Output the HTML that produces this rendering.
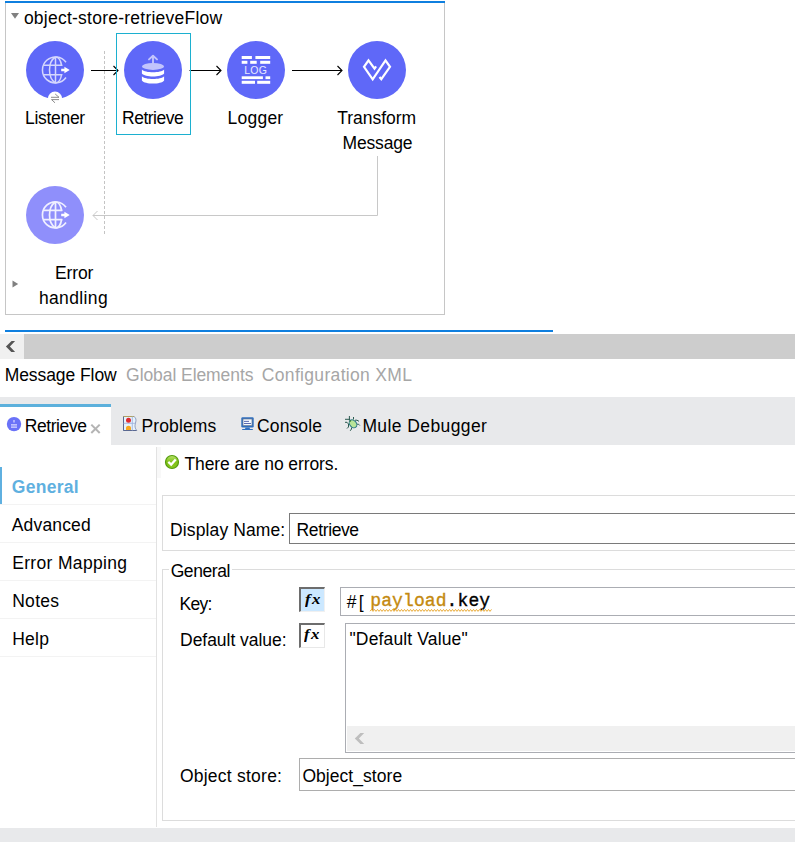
<!DOCTYPE html>
<html lang="en">
<head>
<meta charset="utf-8">
<title>object-store-retrieveFlow</title>
<style>
html,body{margin:0;padding:0;background:#fff;overflow:hidden;}
body{width:795px;height:842px;position:relative;overflow:hidden;font-family:"Liberation Sans",sans-serif;font-size:17.5px;line-height:20px;color:#000;}
.a{position:absolute;}
.t{position:absolute;white-space:pre;line-height:20px;}
svg{position:absolute;left:0;top:0;overflow:visible;}
.mono{font-family:"Liberation Mono",monospace;}
.fx{position:absolute;font-family:"Liberation Serif",serif;font-style:italic;font-weight:bold;font-size:15px;line-height:16px;letter-spacing:1.3px;transform:scaleX(1.12);transform-origin:0 0;}
</style>
</head>
<body>
<!-- canvas panel -->
<div class="a" style="left:5px;top:1px;width:440px;height:2px;background:#0f7fdf"></div>
<div class="a" style="left:5px;top:3px;width:438px;height:311px;border:1px solid #c6c6c6;border-top:none"></div>
<!-- second blue line + scrollbar -->
<div class="a" style="left:5px;top:330px;width:548px;height:2px;background:#0f7fdf"></div>
<div class="a" style="left:0;top:334px;width:795px;height:25px;background:#f0f0f0"></div>
<div class="a" style="left:24px;top:334px;width:771px;height:25px;background:#cdcdcd"></div>
<!-- tab bar -->
<div class="a" style="left:0;top:397px;width:795px;height:48px;background:#e8e9eb"></div>
<div class="a" style="left:0;top:404px;width:111px;height:41px;background:#fff"></div>
<div class="a" style="left:0;top:404px;width:111px;height:3px;background:#5cb0dc"></div>
<!-- sidebar -->
<div class="a" style="left:156px;top:447px;width:1px;height:380px;background:#e2e2e2"></div>
<div class="a" style="left:157px;top:447px;width:4px;height:31px;background:#f8f8f8"></div>
<div class="a" style="left:0;top:467px;width:2px;height:37px;background:#5fb0e0"></div>
<div class="a" style="left:0;top:504px;width:156px;height:1px;background:#f3f3f3"></div>
<div class="a" style="left:0;top:542px;width:156px;height:1px;background:#f3f3f3"></div>
<div class="a" style="left:0;top:580px;width:156px;height:1px;background:#f3f3f3"></div>
<div class="a" style="left:0;top:618px;width:156px;height:1px;background:#f3f3f3"></div>
<div class="a" style="left:0;top:656px;width:156px;height:1px;background:#f3f3f3"></div>
<!-- group boxes -->
<div class="a" style="left:162px;top:495px;width:700px;height:54px;border:1px solid #dcdcdc"></div>
<div class="a" style="left:289px;top:513px;width:600px;height:29px;border:1px solid #7a7a7a"></div>
<div class="a" style="left:162px;top:569px;width:700px;height:250px;border:1px solid #dcdcdc"></div>
<div class="a" style="left:169px;top:565px;width:63px;height:10px;background:#fff"></div>
<!-- key input -->
<div class="a" style="left:340px;top:587px;width:600px;height:27px;border:1px solid #abadb3"></div>
<!-- textarea -->
<div class="a" style="left:345px;top:623px;width:600px;height:128px;border:1px solid #abadb3"></div>
<div class="a" style="left:347px;top:726px;width:448px;height:25px;background:#f0f0f0"></div>
<!-- combo -->
<div class="a" style="left:299px;top:758px;width:600px;height:31px;border:1px solid #adadad"></div>
<!-- fx buttons -->
<div class="a" style="left:299px;top:587px;width:23px;height:22px;background:#cce8ff;border-top:2px solid #6d6d6d;border-left:2px solid #6d6d6d;border-right:1px solid #f0f0f0;border-bottom:1px solid #f0f0f0"></div>
<div class="a" style="left:299px;top:623px;width:23px;height:22px;background:#fff;border-top:2px solid #6d6d6d;border-left:2px solid #6d6d6d;border-right:1px solid #e8e8e8;border-bottom:1px solid #e8e8e8"></div>
<span class="fx" style="left:305.2px;top:590.7px">fx</span>
<span class="fx" style="left:304.2px;top:625.7px">fx</span>
<!-- bottom gray -->
<div class="a" style="left:0;top:828px;width:795px;height:14px;background:#e8e9eb"></div>

<!-- mono expression -->
<span class="t mono" id="m1" style="left:370.3px;top:590.5px;font-size:18px;color:#c48a10;letter-spacing:0.1px;-webkit-text-stroke:0.35px #c48a10">payload</span><span class="t mono" id="m2" style="left:446.6px;top:590.5px;font-size:18px;color:#000;letter-spacing:0.1px;-webkit-text-stroke:0.35px #000">.key</span>

<span class="t" id="t1" style="left:23.90px;top:8.04px;letter-spacing:0.239px;">object-store-retrieveFlow</span>
<span class="t" id="t2" style="left:25.10px;top:107.94px;letter-spacing:-0.309px;">Listener</span>
<span class="t" id="t3" style="left:122.00px;top:107.94px;letter-spacing:-0.496px;">Retrieve</span>
<span class="t" id="t4" style="left:227.60px;top:107.94px;letter-spacing:0.220px;">Logger</span>
<span class="t" id="t5" style="left:337.30px;top:107.94px;letter-spacing:-0.049px;">Transform</span>
<span class="t" id="t6" style="left:342.60px;top:133.04px;letter-spacing:-0.186px;">Message</span>
<span class="t" id="t7" style="left:55.10px;top:262.74px;letter-spacing:-0.173px;">Error</span>
<span class="t" id="t8" style="left:38.90px;top:288.04px;letter-spacing:0.375px;">handling</span>
<span class="t" id="t9" style="left:4.70px;top:365.04px;letter-spacing:-0.075px;">Message Flow</span>
<span class="t" id="t10" style="left:126.10px;top:365.04px;letter-spacing:-0.072px;color:#a6a6a6;">Global Elements</span>
<span class="t" id="t11" style="left:261.80px;top:365.04px;letter-spacing:0.328px;color:#a6a6a6;">Configuration XML</span>
<span class="t" id="t12" style="left:24.70px;top:415.64px;letter-spacing:-0.410px;">Retrieve</span>
<span class="t" id="t13" style="left:141.50px;top:415.64px;letter-spacing:0.125px;">Problems</span>
<span class="t" id="t14" style="left:257.10px;top:415.64px;letter-spacing:0.097px;">Console</span>
<span class="t" id="t15" style="left:362.40px;top:415.64px;letter-spacing:0.404px;">Mule Debugger</span>
<span class="t" id="t16" style="left:11.80px;top:476.54px;letter-spacing:0.285px;font-weight:bold;color:#5fb0e0;">General</span>
<span class="t" id="t17" style="left:11.80px;top:514.54px;letter-spacing:0.151px;">Advanced</span>
<span class="t" id="t18" style="left:12.20px;top:552.64px;letter-spacing:0.334px;">Error Mapping</span>
<span class="t" id="t19" style="left:12.20px;top:591.04px;letter-spacing:0.295px;">Notes</span>
<span class="t" id="t20" style="left:12.20px;top:629.04px;letter-spacing:0.267px;">Help</span>
<span class="t" id="t21" style="left:184.50px;top:453.94px;letter-spacing:-0.096px;">There are no errors.</span>
<span class="t" id="t22" style="left:170.10px;top:520.34px;letter-spacing:0.109px;">Display Name:</span>
<span class="t" id="t23" style="left:296.60px;top:520.34px;letter-spacing:-0.382px;">Retrieve</span>
<span class="t" id="t24" style="left:170.70px;top:560.94px;letter-spacing:-0.428px;">General</span>
<span class="t" id="t25" style="left:179.60px;top:593.54px;letter-spacing:-0.744px;">Key:</span>
<span class="t" id="t26" style="left:346.70px;top:591.94px;letter-spacing:2.291px;">#[</span>
<span class="t" id="t28" style="left:180.10px;top:629.54px;letter-spacing:-0.047px;">Default value:</span>
<span class="t" id="t29" style="left:349.50px;top:629.14px;letter-spacing:0.143px;">&quot;Default Value&quot;</span>
<span class="t" id="t30" style="left:179.90px;top:766.04px;letter-spacing:0.240px;">Object store:</span>
<span class="t" id="t31" style="left:302.40px;top:765.64px;letter-spacing:0.053px;">Object_store</span>

<svg width="795" height="842" viewBox="0 0 795 842">
<!-- title triangle -->
<polygon points="11,13 19,13 15,18.8" fill="#808080"/>
<polygon points="12.5,280.4 18.2,284 12.5,287.6" fill="#808080"/>
<!-- dashed lane -->
<line x1="104.5" y1="51" x2="104.5" y2="235" stroke="#c4c4c4" stroke-width="1" stroke-dasharray="3 2"/>
<!-- main circles -->
<g fill="#5f68f8">
<circle cx="55" cy="70" r="29"/><circle cx="153" cy="70" r="29"/><circle cx="256" cy="70" r="29"/><circle cx="377" cy="70" r="29"/>
</g>
<circle cx="55" cy="215" r="29" fill="#8f8ffb"/>
<!-- arrows -->
<g stroke="#000" stroke-width="1.1" fill="none">
<path d="M91 70.5H118M113.5 66L118 70.5L113.5 75"/>
<path d="M189.5 70.5H221M216.5 66L221 70.5L216.5 75"/>
<path d="M292 70.5H342M337.5 66L342 70.5L337.5 75"/>
</g>
<path d="M377.5 156V215.5H93M97.5 211L93 215.5L97.5 220" stroke="#c8c8c8" stroke-width="1" fill="none"/>
<!-- selection -->
<rect x="116.5" y="33.5" width="74" height="101" fill="none" stroke="#1cb0d0" stroke-width="1"/>
<!-- badge -->
<circle cx="55" cy="98.8" r="7.2" fill="#fff"/>
<path d="M51 97.3H59L55.2 94M59 99.6H51.5L55 102.8" stroke="#808080" stroke-width="0.9" fill="none"/>
<!-- globe icon (listener) -->
<g fill="none" stroke="#d4d6fd" stroke-width="1.5">
<path d="M66 62.3A13 13 0 1 0 66 77.5"/>
<path d="M55.5 57V83"/>
<path d="M55.5 57C47.5 62 47.5 78 55.5 83"/>
<path d="M55.5 57A6.5 13 0 0 1 61.7 66M61.7 74A6.5 13 0 0 1 55.5 83"/>
<path d="M43.6 65.3H62.3M43.6 74.7H62.3"/>
</g>
<path d="M61.2 68.7H64.4V66.7L69.7 70L64.4 73.3V71.3H61.2Z" fill="#fff"/>
<!-- globe icon (lower, lighter) -->
<g fill="none" stroke="#f0f0ff" stroke-width="1.7">
<path d="M66 207.3A13 13 0 1 0 66 222.5"/>
<path d="M55.5 202V228"/>
<path d="M55.5 202C47.5 207 47.5 223 55.5 228"/>
<path d="M55.5 202A6.5 13 0 0 1 61.7 211M61.7 219A6.5 13 0 0 1 55.5 228"/>
<path d="M43.6 210.3H62.3M43.6 219.7H62.3"/>
</g>
<path d="M61.2 213.7H64.4V211.7L69.7 215L64.4 218.3V216.3H61.2Z" fill="#fff"/>
<!-- retrieve icon -->
<path d="M153 63.5V56.5M149 59.4L153 55.7L157 59.4" stroke="#c2c4fc" stroke-width="1.9" fill="none" stroke-linecap="round" stroke-linejoin="round"/>
<ellipse cx="153" cy="66.4" rx="11.1" ry="3.5" fill="#c2c4fc"/>
<path d="M141.9 69.5C145 73.2 161 73.2 164.1 69.5V73.6C161 77.6 145 77.6 141.9 73.6Z" fill="#fff"/>
<path d="M141.9 76.3C145 80 161 80 164.1 76.3V80.4C161 84.6 145 84.6 141.9 80.4Z" fill="#fff"/>
<!-- logger icon -->
<g fill="#fff">
<rect x="241.7" y="56" width="10.2" height="3"/><rect x="255.4" y="56" width="14.8" height="3"/>
<rect x="241.7" y="60.8" width="5.7" height="3"/><rect x="250.2" y="60.8" width="6.5" height="3"/><rect x="260.2" y="60.8" width="10" height="3"/>
<rect x="241.7" y="76.3" width="21.2" height="2.8"/><rect x="265.5" y="76.3" width="4.7" height="2.8"/>
<rect x="241.7" y="80.8" width="13.3" height="3"/><rect x="257.2" y="80.8" width="13" height="3"/>
</g>
<text x="244.2" y="73.8" font-family="Liberation Sans, sans-serif" font-size="10.5" fill="#e8e8ff" letter-spacing="0.3">LOG</text>
<!-- transform icon -->
<path d="M376.1 66.4L374.5 68.7L368.5 60.4L364 66.8L372.7 79.4L385.5 60.4L390 66.8L381.3 79.2L379.5 77" stroke="#fff" stroke-width="2.2" fill="none" stroke-linejoin="miter"/>
<!-- scrollbar chevron -->
<polygon points="15.1,341.1 11.6,341.1 5.9,346.4 11.3,351.9 15.1,351.9 9.9,346.4" fill="#555"/>
<polygon points="364.2,733.1 360.4,733.1 354.8,738.4 360.4,743.9 364.2,743.9 358.9,738.4" fill="#bebebe"/>
<!-- tab: retrieve icon + close -->
<circle cx="14" cy="424.1" r="7.2" fill="#6a72f8"/>
<path d="M14 420V422.5M11 424.8H17M11 427.2H17" stroke="#dcdcff" stroke-width="1.2" fill="none"/>
<path d="M91.3 424.6L99.7 433M99.7 424.6L91.3 433" stroke="#b4b4b4" stroke-width="2" fill="none"/>
<!-- problems icon -->
<g>
<path d="M123.5 416.5H134C136 417.5 136.5 420 135.5 423C134.5 426 135 428.5 136.8 430.5H123.5Z" fill="#e6f2fc" stroke="#8896b8" stroke-width="0.9"/>
<path d="M123.5 416.5V430.5H136.5" stroke="#5a6890" stroke-width="1" fill="none"/>
<path d="M123.5 416.5H134" stroke="#b0a060" stroke-width="1" fill="none"/>
<path d="M123.5 423.3H135.5M132.3 416.5V430.5" stroke="#a0b4e0" stroke-width="0.9" fill="none"/>
<circle cx="128.5" cy="420.3" r="2.5" fill="#e02a30"/>
<path d="M126 430V428C126 425 131 425 131 428V430Z" fill="#f8a820"/>
</g>
<!-- console icon -->
<g>
<rect x="241.3" y="417.3" width="12.4" height="10.2" rx="1.2" fill="#2f6fbe"/>
<rect x="243" y="419" width="9" height="6.6" fill="#f4fbff" stroke="#6c7890" stroke-width="0.7"/>
<path d="M244 421.4H249M244 423.5H251" stroke="#4a5aa8" stroke-width="0.9"/>
<path d="M245.5 427.5H249.5L250 429H252.8V430H242.2V429H245Z" fill="#2f6fbe"/>
</g>
<!-- bug icon -->
<g>
<g stroke="#2c5a50" stroke-width="1" fill="none">
<path d="M349.4 416V420.5M345 419.3H350M353.5 417V419.5M345 422.3H347L348.5 424V427L347 428.5M355 420.2H357L359 421.3M357 424.2H358.5L359.8 425.5M351.5 427.5V429L350.2 430.8"/>
</g>
<ellipse cx="353" cy="423.8" rx="3.3" ry="4.4" transform="rotate(-40 353 423.8)" fill="#b8e498" stroke="#2c7888" stroke-width="1"/>
<circle cx="350.3" cy="421" r="0.8" fill="#2c7020"/>
</g>
<!-- green ok icon -->
<defs><linearGradient id="gok" x1="0" y1="0" x2="0" y2="1"><stop offset="0" stop-color="#b8e46c"/><stop offset="0.5" stop-color="#80c018"/><stop offset="1" stop-color="#88c820"/></linearGradient></defs>
<circle cx="172" cy="462" r="6.5" fill="url(#gok)" stroke="#549c0c" stroke-width="1.2"/>
<path d="M168.3 461.9L171.2 464.6L175.7 459.6" stroke="#fff" stroke-width="2.3" fill="none" stroke-linejoin="miter"/>
<!-- wavy underline -->
<path d="M370 611.2L371.5 609.4L373.0 611.4L374.5 609.4L376.0 611.4L377.5 609.4L379.0 611.4L380.5 609.4L382.0 611.4L383.5 609.4L385.0 611.4L386.5 609.4L388.0 611.4L389.5 609.4L391.0 611.4L392.5 609.4L394.0 611.4L395.5 609.4L397.0 611.4L398.5 609.4L400.0 611.4L401.5 609.4L403.0 611.4L404.5 609.4L406.0 611.4L407.5 609.4L409.0 611.4L410.5 609.4L412.0 611.4L413.5 609.4L415.0 611.4L416.5 609.4L418.0 611.4L419.5 609.4L421.0 611.4L422.5 609.4L424.0 611.4L425.5 609.4L427.0 611.4L428.5 609.4L430.0 611.4L431.5 609.4L433.0 611.4L434.5 609.4L436.0 611.4L437.5 609.4L439.0 611.4L440.5 609.4L442.0 611.4L443.5 609.4L445.0 611.4L446.5 609.4L448.0 611.4L449.5 609.4L451.0 611.4L452.5 609.4L454.0 611.4L455.5 609.4L457.0 611.4L458.5 609.4L460.0 611.4L461.5 609.4L463.0 611.4L464.5 609.4L466.0 611.4L467.5 609.4L469.0 611.4L470.5 609.4L472.0 611.4L473.5 609.4L475.0 611.4L476.5 609.4L478.0 611.4L479.5 609.4L481.0 611.4L482.5 609.4L484.0 611.4L485.5 609.4L487.0 611.4L488.5 609.4L490.0 611.4L491.5 609.4" stroke="#e8a428" stroke-width="0.9" fill="none"/>

</svg>
</body>
</html>
